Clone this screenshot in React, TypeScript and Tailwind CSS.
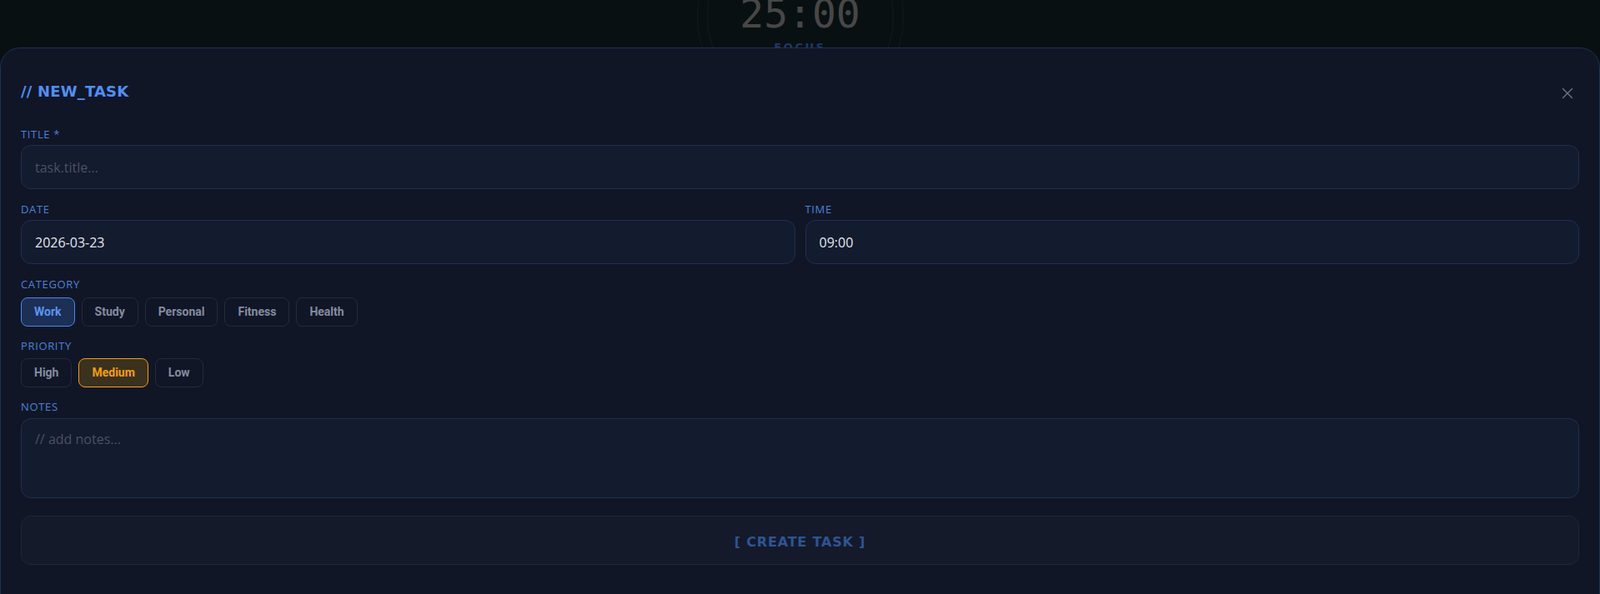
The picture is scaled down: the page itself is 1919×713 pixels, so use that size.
import { X } from 'lucide-react';

const categories = ['Work', 'Study', 'Personal', 'Fitness', 'Health'];
const priorities = ['High', 'Medium', 'Low'];

const labelCls =
  "block text-[13px] leading-4 tracking-wider uppercase text-[#4b82dc] font-['Open_Sans',sans-serif]";
const inputCls =
  "w-full h-[53px] px-4 rounded-xl bg-[#131b2f] border border-[#1e2f50] text-[16px] text-[#e5e7eb] placeholder:text-[#4a5164] outline-none font-['Open_Sans',sans-serif]";

function Chip({ label, active, tone }: { label: string; active: boolean; tone: 'blue' | 'amber' }) {
  const on =
    tone === 'blue'
      ? 'bg-[#1c2f55] border-[#4a86e8] text-[#5a95f5]'
      : 'bg-[#3b311f] border-[#f59e0b] text-[#f59e0b]';
  return (
    <button
      className={`h-[35px] px-[15px] rounded-lg border text-[14px] font-bold font-['Roboto',sans-serif] ${
        active ? on : 'bg-transparent border-[#232a3a] text-[#858ca0]'
      }`}
    >
      {label}
    </button>
  );
}

export default function App() {
  return (
    <div className="relative w-full h-[713px] overflow-hidden bg-[#091012]">
      {/* Background timer (behind the sheet) */}
      <div className="flex justify-center">
        <div className="w-[248px] h-[248px] -mt-[104px] rounded-full border border-[#111a21] flex items-center justify-center">
          <div className="w-[224px] h-[224px] rounded-full border border-[#111a21] flex flex-col items-center pt-[83px]">
            <span className="text-[48px] leading-none text-[#474747] font-['DejaVu_Sans_Mono',monospace]">25:00</span>
            <span className="mt-[10px] text-[13px] leading-none font-bold tracking-[0.2em] text-[#1d3a6a] font-['DejaVu_Sans',sans-serif]">
              FOCUS
            </span>
          </div>
        </div>
      </div>

      {/* Sheet */}
      <div className="absolute left-0 right-0 top-[57px] bottom-[-40px] rounded-t-3xl border border-[#1e3254] bg-[#101626] px-6 pt-[38px]">
        <div className="flex items-center justify-between mb-[29px]">
          <h2 className="text-[18px] leading-7 font-bold tracking-[0.01em] text-[#4f8ff7] font-['DejaVu_Sans',sans-serif]">
            // NEW_TASK
          </h2>
          <X size={22} strokeWidth={1.6} className="text-[#6b6e87] mr-[3px] mt-[3px]" />
        </div>

        <div className="flex flex-col">
          <div>
            <label className={`${labelCls} mb-[5px]`}>Title *</label>
            <input className={inputCls} placeholder="task.title..." />
          </div>

          <div className="grid grid-cols-2 gap-3 mt-4">
            <div>
              <label className={`${labelCls} mb-[5px]`}>Date</label>
              <input className={inputCls} defaultValue="2026-03-23" />
            </div>
            <div>
              <label className={`${labelCls} mb-[5px]`}>Time</label>
              <input className={inputCls} defaultValue="09:00" />
            </div>
          </div>

          <div className="mt-4">
            <label className={`${labelCls} mb-2`}>Category</label>
            <div className="flex gap-2">
              {categories.map(c => (
                <Chip key={c} label={c} active={c === 'Work'} tone="blue" />
              ))}
            </div>
          </div>

          <div className="mt-[15px]">
            <label className={`${labelCls} mb-[7px]`}>Priority</label>
            <div className="flex gap-2">
              {priorities.map(p => (
                <Chip key={p} label={p} active={p === 'Medium'} tone="amber" />
              ))}
            </div>
          </div>

          <div className="mt-[15px]">
            <label className={`${labelCls} mb-[6px]`}>Notes</label>
            <textarea
              className="w-full h-[96px] block resize-none px-4 py-3 rounded-xl bg-[#131b2f] border border-[#1e2f50] text-[16px] text-[#e5e7eb] placeholder:text-[#4a5164] outline-none font-['Open_Sans',sans-serif]"
              placeholder="// add notes..."
            />
          </div>

          <button className="mt-[21px] w-full h-[59px] pt-1 rounded-xl bg-[#141a29] border border-[#1f2637] text-[16px] font-bold tracking-wider text-[#2f5494] font-['DejaVu_Sans',sans-serif]">
            [ CREATE TASK ]
          </button>
        </div>
      </div>
    </div>
  );
}
